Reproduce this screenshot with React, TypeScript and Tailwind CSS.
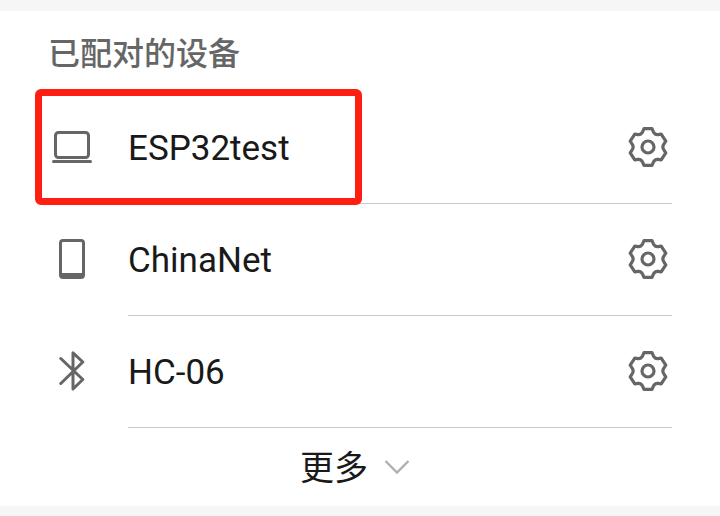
import type { ReactNode } from "react";

function LaptopIcon() {
  return (
    <svg viewBox="0 0 40 40" className="h-10 w-10" fill="none" stroke="#666666" strokeWidth="3" strokeLinecap="round" aria-hidden="true">
      <rect x="3.5" y="5.5" width="33" height="25" rx="3" />
      <path d="M1.5 34.5h37" />
    </svg>
  );
}

function PhoneIcon() {
  return (
    <svg viewBox="0 0 40 40" className="h-10 w-10" fill="none" stroke="#666666" strokeWidth="3" aria-hidden="true">
      <rect x="8.5" y="1.5" width="23" height="37" rx="2.5" />
      <path d="M9 36.5h22" strokeWidth="5" />
    </svg>
  );
}

function BluetoothIcon() {
  return (
    <svg viewBox="0 0 40 40" className="h-10 w-10" fill="none" stroke="#666666" strokeWidth="3" strokeLinecap="round" strokeLinejoin="round" aria-hidden="true">
      <path d="M8.8 7.5 30.8 28.5 21 38V1.8L30.8 11 8.8 32.5" />
    </svg>
  );
}

function GearIcon() {
  return (
    <svg viewBox="0 0 40 40" className="h-10 w-10" fill="none" stroke="#666666" strokeWidth="3.2" strokeLinejoin="round" aria-hidden="true">
      <path d="M16 1.6H24L25.3 4.7Q26.8 8 30 7.6L33.2 7.2L37.8 14.2L36.3 16.4Q33.4 20 36.3 23.6L37.8 25.8L33.2 32.8L30 32.4Q26.8 32 25.3 35.3L24 38.4H16L14.7 35.3Q13.2 32 10 32.4L6.8 32.8L2.2 25.8L3.7 23.6Q6.6 20 3.7 16.4L2.2 14.2L6.8 7.2L10 7.6Q13.2 8 14.7 4.7Z" />
      <circle cx="20" cy="20" r="6" />
    </svg>
  );
}

type Device = { name: string; icon: ReactNode; highlighted?: boolean };

const devices: Device[] = [
  { name: "ESP32test", icon: <LaptopIcon />, highlighted: true },
  { name: "ChinaNet", icon: <PhoneIcon /> },
  { name: "HC-06", icon: <BluetoothIcon /> },
];

function DeviceRow({ name, icon, highlighted }: Device) {
  return (
    <li className="relative flex h-28 items-stretch gap-9 pl-1">
      <div className="flex w-10 items-center pb-0.5">{icon}</div>
      <div className="flex flex-1 items-center justify-between border-b border-[#c9c9c9] pr-1">
        <span className="pt-0.5 text-[35px] leading-10">{name}</span>
        <button type="button" aria-label={`${name} 设置`} className="pb-px">
          <GearIcon />
        </button>
      </div>
      {highlighted && (
        <div className="pointer-events-none absolute -top-[3px] -left-[13px] h-[116px] w-[327px] rounded-md border-7 border-[#ff1f12]" />
      )}
    </li>
  );
}

export default function App() {
  return (
    <div className="min-h-screen bg-[#f6f6f6] pt-[11px] font-['Roboto','Noto_Sans_CJK_SC',sans-serif] text-[#191919]">
      <main className="bg-white px-12">
        <h1 className="flex h-[81px] items-center pt-1 text-[32px] leading-10 font-medium text-[#666666]">已配对的设备</h1>
        <ul>
          {devices.map((device) => (
            <DeviceRow key={device.name} {...device} />
          ))}
        </ul>
        <button type="button" className="mx-auto flex h-[78px] items-center gap-4 pr-2.5 text-[34px] leading-10">
          <span className="pt-0.5">更多</span>
          <svg viewBox="0 0 26 16" className="h-4 w-[26px]" fill="none" stroke="#b0b0b0" strokeWidth="2.4" aria-hidden="true">
            <path d="M1.5 2 13 13.5 24.5 2" />
          </svg>
        </button>
      </main>
    </div>
  );
}
